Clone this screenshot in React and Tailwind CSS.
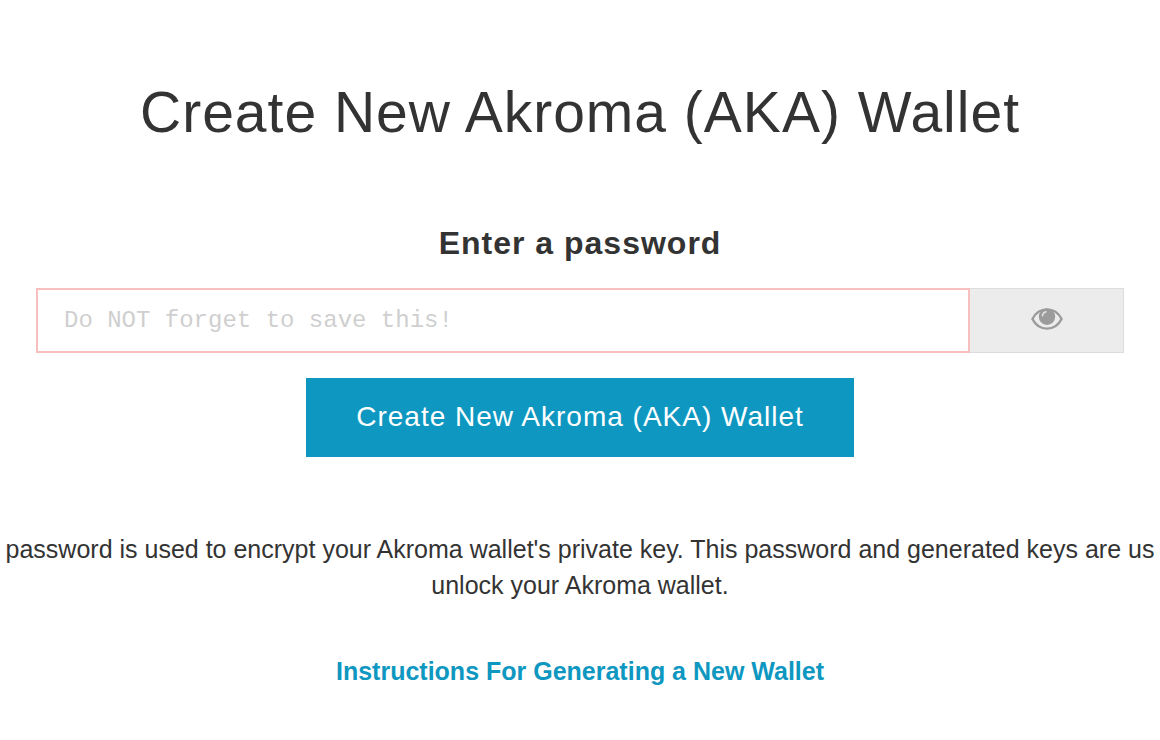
import { useState } from 'react';

const TITLE = 'Create New Akroma (AKA) Wallet';

function EyeIcon({ className }) {
  return (
    <svg viewBox="0 0 32 22" className={className} aria-hidden="true">
      <path
        d="M1.4 11C4.6 4.8 9.8 1.4 16 1.4S27.4 4.8 30.6 11C27.4 17.2 22.2 20.6 16 20.6S4.6 17.2 1.4 11Z"
        fill="none"
        stroke="currentColor"
        strokeWidth="2.4"
        strokeLinejoin="round"
      />
      <circle cx="16" cy="8.8" r="8.2" fill="currentColor" />
      <path d="M11.4 7.8C11.7 5.6 12.9 4.3 15 3.8" fill="none" stroke="#dedede" strokeWidth="1.5" strokeLinecap="round" />
    </svg>
  );
}

export default function App() {
  const [password, setPassword] = useState('');
  const [visible, setVisible]   = useState(true);

  return (
    <main className="overflow-hidden bg-white pt-[76px] text-center text-[#333] font-['Liberation_Sans',Arial,sans-serif]">
      <h1 className="text-[57px] leading-[72px] tracking-[1px]">{TITLE}</h1>

      <form onSubmit={e => e.preventDefault()} className="mt-[75px] px-9">
        <label htmlFor="password" className="block text-[32px] leading-10 font-bold tracking-[1px]">
          Enter a password
        </label>
        <div className="mt-[25px] flex h-[65px]">
          <input
            id="password"
            type={visible ? 'text' : 'password'}
            value={password}
            onChange={e => setPassword(e.target.value)}
            placeholder="Do NOT forget to save this!"
            className="min-w-0 flex-1 border-2 border-[#f7bfbd] px-[26px] text-[24px] outline-none placeholder:text-[#cfcfcf] font-['Liberation_Mono',monospace]"
          />
          <button
            type="button"
            aria-label="Toggle password visibility"
            onClick={() => setVisible(v => !v)}
            className="flex w-[154px] items-center justify-center border border-l-0 border-[#dcdcdc] bg-[#ececec] pb-1 text-[#9b9b9b]"
          >
            <EyeIcon className="h-[22px] w-8" />
          </button>
        </div>
        <button type="submit" className="mt-[25px] h-[79px] bg-[#0e97c0] px-[50px] pb-[2px] text-[28px] tracking-[1px] text-white">
          {TITLE}
        </button>
      </form>

      <div className="mt-[74px] text-[25px] leading-9">
        <p>
          password is used to encrypt your Akroma wallet's private key. This password and generated keys are us
        </p>
        <p>unlock your Akroma wallet.</p>
      </div>

      <a href="#instructions" className="mt-[50px] inline-block text-[25px] leading-9 font-bold text-[#0e97c0]">
        Instructions For Generating a New Wallet
      </a>
    </main>
  );
}
